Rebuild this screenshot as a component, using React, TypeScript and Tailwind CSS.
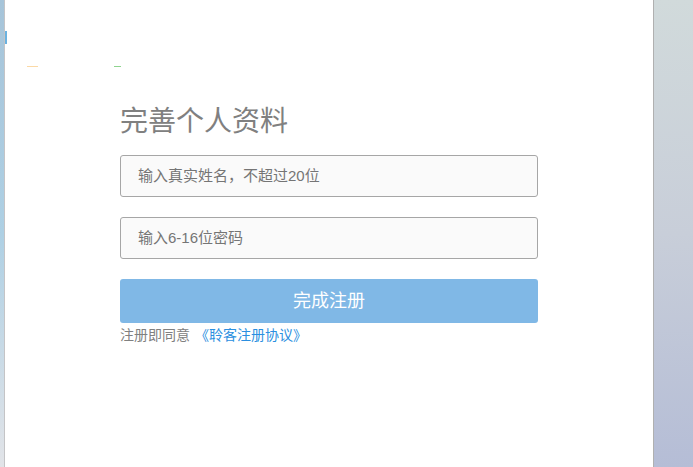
export default function App() {
  const font = "font-['Microsoft_YaHei','Liberation_Sans','Noto_Sans_CJK_SC',sans-serif]";

  return (
    <div className={`flex h-[467px] w-[693px] overflow-hidden ${font}`}>
      <div className="w-[4px] shrink-0 border-r border-[#c4c4c6] bg-gradient-to-b from-[#a6c4d9] via-[#aed0e4] to-[#e2e4e8] box-content" />
      <main className="relative w-[648px] shrink-0 bg-white pl-[115px] pt-[106px]">
        {/* leftovers of the logo, cut off by the panel */}
        <span className="absolute left-[22px] top-[66px] h-px w-[11px] bg-[#fbd9a6]" />
        <span className="absolute left-[109px] top-[66px] h-px w-[7px] bg-[#8fd48f]" />
        <span className="absolute left-0 top-[31px] h-[13px] w-[2px] bg-[#6ab2e0] blur-[0.5px]" />

        <h1 className="text-[28px] leading-[32px] font-normal text-[#808080]">完善个人资料</h1>
        <form className="mt-[17px] flex w-[418px] flex-col">
          <input
            className="h-[42px] rounded-[3px] border border-[#a6a6a6] bg-[#fafafa] pb-[2px] pl-[17px] text-[15px] placeholder:text-[#757575]"
            placeholder="输入真实姓名，不超过20位"
          />
          <input
            className="mt-5 h-[42px] rounded-[3px] border border-[#a6a6a6] bg-[#fafafa] pb-[2px] pl-[17px] text-[15px] placeholder:text-[#757575]"
            placeholder="输入6-16位密码"
          />
          <button
            type="button"
            className="mt-5 h-[44px] rounded-[3px] bg-[#80b8e6] text-lg text-white"
          >
            完成注册
          </button>
          <p className="mt-[3px] text-sm leading-[18px] text-[#808080]">
            注册即同意 <a className="ml-px text-[#2b8fe0]">《聆客注册协议》</a>
          </p>
        </form>
      </main>
      <div className="flex-1 border-l border-[#b0b0b0] bg-gradient-to-b from-[#d1dadb] via-[#c8ced9] to-[#b5bdd6]" />
    </div>
  );
}
